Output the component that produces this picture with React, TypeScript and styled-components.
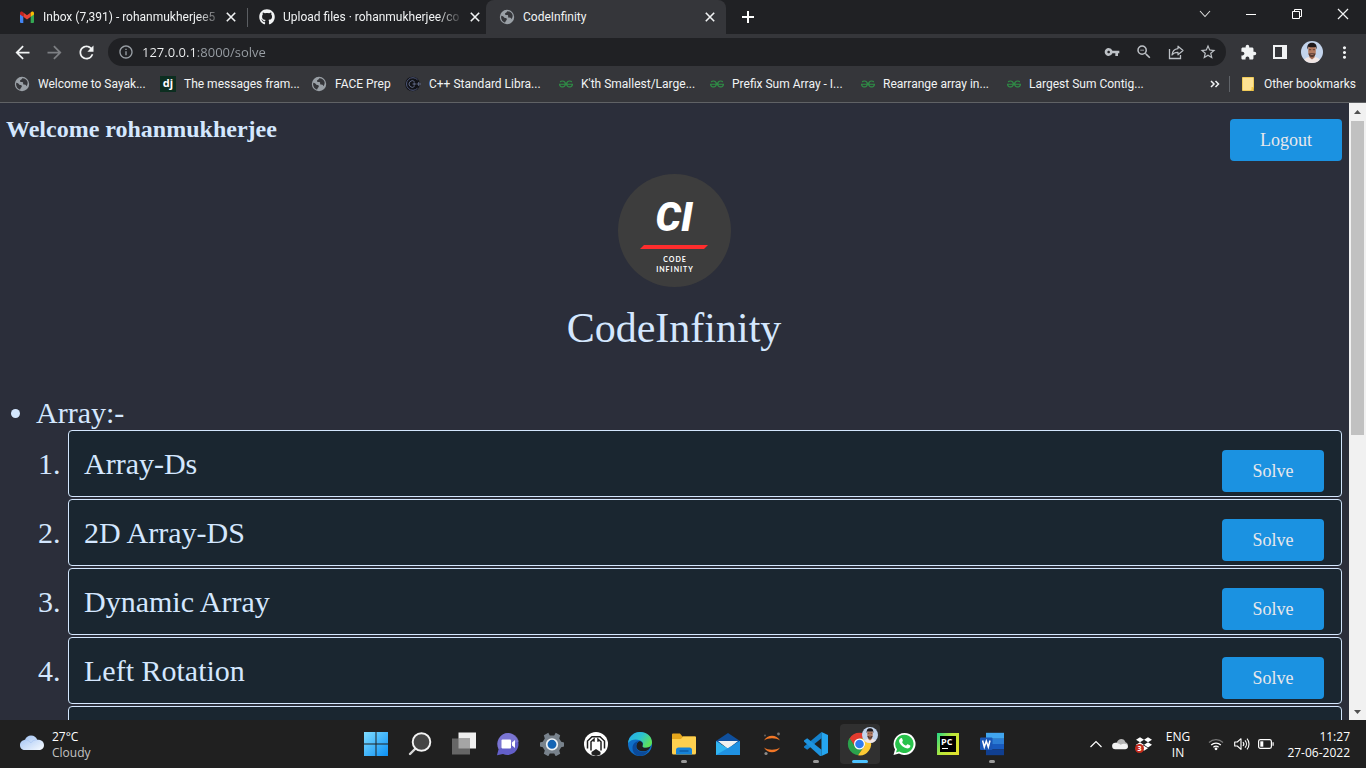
import React from "react";
import styled, { createGlobalStyle, css } from "styled-components";
import {
  MdArrowBack,
  MdArrowForward,
  MdRefresh,
  MdInfoOutline,
  MdVpnKey,
  MdZoomOut,
  MdStarBorder,
  MdExtension,
  MdMoreVert,
} from "react-icons/md";
import { FaGithub, FaDropbox } from "react-icons/fa";
import { SiGeeksforgeeks } from "react-icons/si";

const GlobalStyle = createGlobalStyle`
  * { box-sizing: border-box; }
  body { margin: 0; background: #2b2e3a; }
  button { border: 0; padding: 0; background: none; color: inherit; font: inherit; cursor: pointer; }
  a { color: inherit; text-decoration: none; }
  svg { display: block; flex: none; }
`;

const uiFont = `"Open Sans", "Noto Sans", sans-serif`;
const chromeFont = `Roboto, "Open Sans", sans-serif`;
const pageFont = `"Liberation Serif", "Times New Roman", serif`;

const Desktop = styled.div`
  height: 100vh;
  display: flex;
  flex-direction: column;
  overflow: hidden;
  font-family: ${uiFont};
  font-size: 12px;
`;

/* ---------- browser frame ---------- */

const BrowserHeader = styled.header`
  flex: none;
  background: #35363a;
  border-bottom: 1px solid #606265;
  color: #f1f3f4;
  font-family: ${chromeFont};
`;

const TabStrip = styled.div`
  height: 34px;
  display: flex;
  background: #202124;
  padding-left: 6px;
`;

const Tab = styled.div<{ $active?: boolean; $divided?: boolean }>`
  width: 240px;
  height: 34px;
  display: flex;
  align-items: center;
  gap: 8px;
  padding: 0 8px 0 13px;
  border-radius: 8px 8px 0 0;
  background: ${(p) =>
    p.$active
      ? "#35363a"
      : p.$divided
        ? "linear-gradient(#5b5e62, #5b5e62) 1px 8px / 1px 19px no-repeat"
        : "none"};
`;

const TabTitle = styled.span<{ $fade?: boolean }>`
  flex: 1;
  white-space: nowrap;
  line-height: 18px;
  ${(p) =>
    p.$fade &&
    css`
      mask-image: linear-gradient(90deg, #000 155px, transparent 180px);
    `}
`;

const SquareButton = styled.button<{ $w: number; $h: number }>`
  flex: none;
  width: ${(p) => p.$w}px;
  height: ${(p) => p.$h}px;
  display: flex;
  align-items: center;
  justify-content: center;
`;

const WindowControls = styled.div`
  display: flex;
  margin-left: auto;
`;

const Toolbar = styled.div`
  display: flex;
  align-items: center;
  height: 34px;
  padding: 4px 6px 2px;
  gap: 6px;
`;

const ToolGroup = styled.div<{ $color?: string }>`
  display: flex;
  align-items: center;
  color: ${(p) => p.$color ?? "#f1f3f4"};
`;

const AddressBar = styled.label`
  flex: 1;
  height: 28px;
  display: flex;
  align-items: center;
  padding: 0 2px 0 10px;
  gap: 8px;
  border-radius: 14px;
  background: #202124;
  color: #9aa0a6;
`;

const AddressInput = styled.input`
  flex: 1;
  min-width: 0;
  border: 0;
  padding: 0;
  outline: 0;
  font: 13px/20px ${uiFont};
  color: transparent;
  background: linear-gradient(90deg, #f1f3f4 55px, #9aa0a6 55px);
  background-clip: text;
  -webkit-background-clip: text;
`;

const BookmarkBar = styled.nav`
  display: flex;
  align-items: center;
  height: 34px;
  padding: 0 10px 2px 14px;
`;

const Bookmark = styled.a<{ $w?: number }>`
  flex: none;
  width: ${(p) => (p.$w ? `${p.$w}px` : "auto")};
  display: flex;
  align-items: center;
  gap: 8px;
  white-space: nowrap;
`;

const BookmarkEnd = styled.div`
  display: flex;
  align-items: center;
  margin-left: auto;
  gap: 8px;
`;

const Divider = styled.span`
  width: 1px;
  height: 16px;
  background: #5f6368;
  margin-right: 2px;
`;

/* ---------- web page ---------- */

const Viewport = styled.div`
  flex: 1;
  min-height: 0;
  display: flex;
  overflow: hidden;
`;

const Page = styled.main`
  flex: 1;
  min-width: 0;
  overflow: hidden;
  padding: 16px 7px 0 6px;
  background: #2b2e3a;
  color: #d4e7fe;
  font-family: ${pageFont};
`;

const PageHeader = styled.div`
  display: flex;
  justify-content: space-between;
  align-items: flex-start;
`;

const Welcome = styled.h2`
  margin: 0;
  font-size: 24px;
  line-height: 20px;
`;

const BlueButton = styled.button<{ $w: number }>`
  flex: none;
  width: ${(p) => p.$w}px;
  height: 42px;
  border-radius: 4px;
  background: #1b92e1;
  color: #e8e8ec;
  font-family: ${pageFont};
  font-size: 18px;
`;

const Brand = styled.div`
  display: flex;
  flex-direction: column;
  align-items: center;
  padding: 13px 0 44px;
`;

const LogoDisc = styled.div`
  width: 113px;
  height: 113px;
  border-radius: 50%;
  background: #3d3d3d;
  color: #fff;
  display: flex;
  flex-direction: column;
  align-items: center;
  padding-top: 20px;
`;

const Monogram = styled.span`
  font: italic 900 40px/48px Roboto, sans-serif;
`;

const LogoCaption = styled.span`
  margin-top: 4px;
  padding-left: 2px;
  text-align: center;
  font: 700 7px/10px Lato, sans-serif;
  letter-spacing: 1px;
`;

const BrandName = styled.h1`
  margin: 17px 0 0;
  font-size: 42px;
  font-weight: 400;
  line-height: 48px;
`;

const TopicList = styled.ul`
  margin: 0;
  padding-left: 30px;
  font-size: 30px;
  line-height: 34px;
`;

const ProblemList = styled.ol`
  margin: 0;
  padding-left: 32px;
  display: flex;
  flex-direction: column;
  gap: 2px;
`;

const ProblemItem = styled.li`
  min-height: 67px;
  padding: 19px 17px 0 15px;
  border: 1px solid #d4e7fe;
  border-radius: 4px;
  background: #1a2630;
  line-height: 28px;
`;

const ProblemRow = styled.div`
  display: flex;
  justify-content: space-between;
  height: 28px;
`;

const ScrollRail = styled.div`
  flex: none;
  width: 17px;
  display: flex;
  flex-direction: column;
  align-items: center;
  background: #f1f1f1;
`;

const ScrollTrack = styled.div`
  flex: 1;
  width: 13px;
`;

const ScrollThumb = styled.div`
  height: 54%;
  background: #c1c1c1;
`;

/* ---------- taskbar ---------- */

const Taskbar = styled.footer`
  flex: none;
  height: 48px;
  display: grid;
  grid-template-columns: 1fr auto 1fr;
  align-items: center;
  background: #202020;
  color: #fff;
`;

const Weather = styled.button`
  justify-self: start;
  display: flex;
  align-items: center;
  gap: 8px;
  margin-left: 20px;
  text-align: left;
  line-height: 16px;
`;

const Muted = styled.span`
  color: #c4c4c4;
`;

const Stack = styled.span<{ $align?: string }>`
  display: flex;
  flex-direction: column;
  padding-top: 2px;
  align-items: ${(p) => p.$align ?? "flex-start"};
`;

const AppRow = styled.div`
  display: flex;
  gap: 4px;
  padding-left: 2px;
`;

const AppButton = styled.button<{ $state?: "open" | "active" }>`
  position: relative;
  width: 40px;
  height: 40px;
  display: flex;
  align-items: center;
  justify-content: center;
  border-radius: 4px;
  background: ${(p) => (p.$state === "active" ? "#303030" : "none")};
  ${(p) =>
    p.$state &&
    css`
      &::after {
        content: "";
        position: absolute;
        bottom: 1px;
        width: ${p.$state === "active" ? 16 : 6}px;
        height: 3px;
        border-radius: 2px;
        background: ${p.$state === "active" ? "#4cc2ff" : "#9a9a9a"};
      }
    `}
`;

const Tray = styled.div`
  justify-self: end;
  display: flex;
  align-items: center;
  margin-right: 16px;
  line-height: 16px;
`;

const TrayButton = styled.button<{ $w: number }>`
  width: ${(p) => p.$w}px;
  height: 40px;
  display: flex;
  align-items: center;
  justify-content: center;
`;

const Clock = styled.button`
  width: 70px;
  display: flex;
  justify-content: flex-end;
  white-space: nowrap;
  text-align: right;
`;

/* ---------- drawings ---------- */

const Svg = ({ s = 24, box = 24, children }: { s?: number; box?: number; children: React.ReactNode }) => (
  <svg width={s} height={s} viewBox={`0 0 ${box} ${box}`} fill="none" aria-hidden="true">
    {children}
  </svg>
);

const Gmail = () => (
  <Svg s={16} box={16}>
    <path d="M1 4.5V13a1 1 0 0 0 1 1h2.3V7.2z" fill="#4285f4" />
    <path d="M15 4.5V13a1 1 0 0 1-1 1h-2.3V7.2z" fill="#34a853" />
    <path d="M4.3 3.4v4.4L8 10.6l3.7-2.8V3.4L8 6.2z" fill="#ea4335" />
    <path d="M1 4.2v1.2l3.3 2.4V3.4l-.9-.7C2.4 2 1 2.7 1 4.2z" fill="#c5221f" />
    <path d="M15 4.2v1.2l-3.3 2.4V3.4l.9-.7c1-.7 2.400 0 2.400 1.500z" fill="#fbbc04" />
  </Svg>
);

const Globe = () => (
  <Svg s={16} box={16}>
    <circle cx="8" cy="8" r="7.2" fill="#9aa0a6" />
    <path d="M2.300 6.800C3.600 7 4.600 7.400 5 8.300c.4.800 1.500.8 2.300 1 .9.300.6 1.600-.1 2.200-.7.500-.6 1.700-1.300 2.100C3.400 12.800 1.500 10 2.300 6.800z" fill="#35363a" />
    <path d="M8.300 2.200c-.4 1.500-2 1.400-2.300 2.500-.3 1.100 1 1.400 2 1.300 1.200-.1 1.300 1 1.100 1.800-.1.800.9.900 1.600.8.900-.1 1.500.7 1.500 1.700 1.100-1.100 1.800-3 1.300-4.600C12.700 3.400 10.500 2 8.300 2.200z" fill="#35363a" />
  </Svg>
);

const Cross = ({ s = 10, w = 1.6 }: { s?: number; w?: number }) => (
  <Svg s={s} box={10}>
    <path d="M.8.8l8.400 8.400M9.200.8L.8 9.200" stroke="#f1f3f4" strokeWidth={w} />
  </Svg>
);

const DjangoBox = styled.span`
  width: 16px;
  height: 16px;
  background: #0c2e20;
  color: #fff;
  text-align: center;
  font: 700 11px/14px ${uiFont};
`;

const CppIcon = () => (
  <Svg s={16} box={16}>
    <circle cx="7.5" cy="8" r="7.3" fill="#111217" />
    <path d="M12.500 3.800A6.300 6.300 0 1 0 12.500 12.200" stroke="#4e5779" strokeWidth="1" />
    <path d="M9.500 5.500a3.300 3.300 0 1 0 0 5M7.500 8h3.500M9.200 6.300v3.400M11.500 8H16M13.700 6v4" stroke="#66708f" strokeWidth=".9" />
  </Svg>
);

const ShareIcon = () => (
  <Svg s={16} box={16}>
    <path d="M1.500 5v9.500h11V11" stroke="currentColor" strokeWidth="1.3" />
    <path d="M10 2.200l5 4.300-5 4.300V8.400C7.500 8.300 5.500 9 4 11c.3-3.300 2.400-6 6-6.400z" stroke="currentColor" strokeWidth="1.2" strokeLinejoin="round" />
  </Svg>
);

const Avatar = ({ s }: { s: number }) => (
  <Svg s={s} box={22}>
    <clipPath id={`face${s}`}>
      <circle cx="11" cy="11" r="11" />
    </clipPath>
    <g clipPath={`url(#face${s})`}>
      <path d="M0 0h22v22H0z" fill="#c3d4ec" />
      <path d="M2 22c.5-4 3-5.500 6.500-6h5c3.500.5 6 2 6.500 6z" fill="#f1e6e4" />
      <path d="M8.500 13h5v3.500L11 18.500l-2.500-2z" fill="#a56d55" />
      <path d="M7.200 6h7.600v5c0 3-1.800 5-3.800 5s-3.800-2-3.800-5z" fill="#b27a60" />
      <path d="M6.500 8.500C5.700 4.500 7.500 1.800 11 1.800s5.300 2.700 4.500 6.700l-.8-2.500c-2 .4-5 .4-7.300-.3z" fill="#1e191b" />
      <path d="M7.400 12.300c1 .6 2-.2 3.600-.2s2.600.8 3.600.2c-.3 2.400-1.800 4-3.600 4s-3.300-1.600-3.600-4z" fill="#553a31" />
      <path d="M9.500 13.300h3" stroke="#c08676" strokeWidth=".8" />
      <path d="M8 8.700h2.200M11.800 8.700H14" stroke="#4b302a" strokeWidth=".8" />
    </g>
  </Svg>
);

const CloudIcon = () => (
  <Svg s={24}>
    <defs>
      <linearGradient id="cloud" x1="0" y1="0" x2="1" y2="1">
        <stop stopColor="#9dc0f3" />
        <stop offset="1" stopColor="#f7fbff" />
      </linearGradient>
    </defs>
    <path d="M5 8c.8-3 3.300-4.500 6-4.500 3.200 0 5.300 1.600 6.200 4.300C21 7.700 24 9.600 24 13c0 3.300-2.200 5-5 5H5c-3 0-5-2-5-4.800C0 10.200 2.200 8 5 8z" fill="url(#cloud)" />
    <path d="M4.500 8c2.600-.3 5 .6 6.300 3 1-1.800 3.400-3.300 6.400-3.200" stroke="#a9c6f2" strokeWidth=".7" />
  </Svg>
);

const WindowsIcon = () => (
  <Svg>
    <defs>
      <linearGradient id="win" gradientUnits="userSpaceOnUse" x1="0" y1="0" x2="24" y2="24">
        <stop stopColor="#7fdcff" />
        <stop offset="1" stopColor="#0b90f5" />
      </linearGradient>
    </defs>
    <path d="M0 0h11.500v11.500H0zM12.500 0H24v11.500H12.500zM0 12.500h11.500V24H0zM12.500 12.500H24V24H12.500z" fill="url(#win)" />
  </Svg>
);

const SearchIcon = () => (
  <Svg>
    <path d="M2 22l6.500-6.500" stroke="#d8d8d8" strokeWidth="2.4" strokeLinecap="round" />
    <circle cx="13.5" cy="10" r="8.800" fill="#464646" stroke="#f4f4f4" strokeWidth="1.900" />
  </Svg>
);

const TaskViewIcon = () => (
  <Svg>
    <path d="M6.500.500H24v16H6.500z" fill="#f0f0f0" />
    <path d="M0 6.500h18v16H0z" fill="#666" />
    <path d="M6.500 6.500H18v10H6.500z" fill="#a5a5a5" />
  </Svg>
);

const ChatIcon = () => (
  <Svg>
    <path d="M12.500 1A11 11 0 1 1 7 22L1 23.200 2.600 17A11 11 0 0 1 12.500 1z" fill="#635fc9" />
    <path d="M12.500 1A11 11 0 0 0 2.600 17L23 9.500A11 11 0 0 0 12.500 1z" fill="#8b83d8" opacity=".6" />
    <rect x="5.5" y="7.5" width="9.5" height="9" rx="1" fill="#fff" />
    <path d="M16 10.500L19 8v8l-3-2.500z" fill="#fff" />
  </Svg>
);

const GearIcon = () => (
  <Svg>
    <path d="M8.300.800L9.800 3.500h4.400L15.700.8l4.500 2.400-1 3.200 2 3.400 2.800.7v4l-2.800.700-2 3.400 1 3.200-4.500 2.400-1.500-2.700H9.800l-1.500 2.700-4.500-2.400 1-3.200-2-3.400-2.800-.7v-4l2.800-.7 2-3.400-1-3.200z" fill="#78828c" />
    <circle cx="12" cy="12.300" r="5.300" fill="#1464b4" stroke="#eef2f5" strokeWidth="1.700" />
  </Svg>
);

const BadgeIcon = () => (
  <Svg>
    <circle cx="12" cy="12" r="12" fill="#fff" />
    <path d="M3.500 16.500V9L8 4.700h8L20.500 9v7.500" stroke="#202020" strokeWidth="1.500" />
    <path d="M7 18.500V9.800l3-2.600v2.600M17 18.500V9.800l-3-2.600v2.600" stroke="#202020" strokeWidth="1.500" />
    <path d="M7.500 22.500v-2.500L12 17l4.500 3v2.500L12 24z" fill="#202020" />
  </Svg>
);

const EdgeIcon = () => (
  <Svg>
    <defs>
      <linearGradient id="edge" x1="0" y1="0" x2="1" y2=".5">
        <stop stopColor="#26a9ea" />
        <stop offset=".55" stopColor="#2cc3cf" />
        <stop offset="1" stopColor="#5de05a" />
      </linearGradient>
    </defs>
    <circle cx="12" cy="12" r="12" fill="#0f6fc8" />
    <path d="M0 11C.8 4.700 5.700 0 12 0c7 0 12 4.800 12 10.200 0 3.400-2.600 5.600-5.800 5.600-3.400 0-4.200-1.400-3.600-2.400.7-1 .6-2.200 0-3.200C12.800 7.300 4 5.500 0 11z" fill="url(#edge)" />
    <path d="M8.300 15c-.4-3 1.400-5.200 3.500-6 1.700.2 3.700 2.200 2.800 4.400-.6 1 .2 2.400 3.600 2.400 1.800 0 3.300-.5 4.500-1.700-1 3-2.500 4.400-4.700 4.900-4.600 1-9.100-.7-9.700-4z" fill="#202020" />
    <path d="M8.300 15c.4 4.300 5.900 6 10.200 4.300 1-.4 2-.9 2.600-1.500C18.500 22 15.500 24 12 24c-5 0-7.500-4-7.500-8 0-4 3-7 7.300-7-2.500 1-3.800 3.300-3.500 6z" fill="#0b4a9a" />
  </Svg>
);

const ExplorerIcon = () => (
  <Svg>
    <path d="M0 2.500a1 1 0 0 1 1-1h7l2.500 3H23a1 1 0 0 1 1 1V10H0z" fill="#e5a61c" />
    <path d="M0 7h9l2-2.500h12a1 1 0 0 1 1 1V21a1.500 1.500 0 0 1-1.500 1.500h-21A1.500 1.500 0 0 1 0 21z" fill="#fdd04f" />
    <path d="M4 22.500V18a2.500 2.500 0 0 1 2.500-2.500h11A2.500 2.500 0 0 1 20 18v4.500z" fill="#1583d8" />
    <path d="M7.500 19h9" stroke="#0c5da8" strokeWidth="1.5" />
  </Svg>
);

const MailIcon = () => (
  <Svg>
    <path d="M0 9l12-8 12 8v3H0z" fill="#0f4f9c" />
    <path d="M2 9h20l-10 8z" fill="#f1f1f1" />
    <path d="M0 9l12 7.500L24 9v14H0z" fill="#31b5f1" />
    <path d="M24 9L0 23h24z" fill="#1a85dc" opacity=".75" />
  </Svg>
);

const JupyterIcon = () => (
  <Svg>
    <path d="M4 8.500c3-6.300 13-6.300 16 0-4-3-12-3-16 0zM4 15.500c3 6.300 13 6.300 16 0-4 3-12 3-16 0z" fill="#f37726" />
    <circle cx="18.5" cy="2" r="1.400" fill="#777" />
    <circle cx="6" cy="21.500" r="1.600" fill="#8a8a8a" />
    <circle cx="5" cy="3.500" r=".9" fill="#666" />
  </Svg>
);

const CodeIcon = () => (
  <Svg>
    <path d="M17.500 0v6.300L3.200 17.800 0 15.500v-1z" fill="#1481cc" />
    <path d="M17.500 17.700L3.200 6.200 0 8.500v1L16 24h1.500z" fill="#1e93de" />
    <path d="M17.500 0L24 3v18l-6.500 3z" fill="#25a5ef" />
  </Svg>
);

const ChromeIcon = () => (
  <svg width="30" height="30" viewBox="-1 2 30 30" fill="none" aria-hidden="true">
    <path d="M3.500 11.500A11.500 11.500 0 0 1 23.500 11.500H13.500L8.500 19z" fill="#e33b2e" />
    <path d="M3.500 11A11.500 11.500 0 0 0 12 28.300L18 19.500H9z" fill="#2ba24c" />
    <path d="M13.500 11.500H23.700A11.500 11.500 0 0 1 12 28.300l6.500-9.300z" fill="#fcc934" />
    <circle cx="13.5" cy="17" r="5.500" fill="#fff" />
    <circle cx="13.5" cy="17" r="4.300" fill="#2f7cf0" />
  </svg>
);

const AvatarBadge = styled.span`
  position: absolute;
  top: 3px;
  right: 2px;
`;

const WhatsAppIcon = () => (
  <Svg>
    <path d="M12.500 1A11 11 0 1 1 7 21.500L1.500 23 3 17.500A11 11 0 0 1 12.500 1z" fill="#fff" />
    <path d="M12.500 2.700A9.200 9.200 0 1 1 7.300 19.600L4 20.600l1-3.300A9.200 9.200 0 0 1 12.500 2.700z" fill="#28c24b" />
    <path d="M8.500 6.500c1-.8 1.500-.4 2 .9.500 1.200.6 1.400-.1 2.100-.5.600-.2.900.5 1.900.8 1 1.700 1.600 2.600 2 .7.300.9 0 1.600-.8.500-.6.700-.4 1.800.1 1.500.7 1.600.9 1.400 1.800-.4 1.500-2.300 2.200-3.800 1.800-4.200-1.200-7-4.300-7.400-7-.2-1.100.5-2.100 1.400-2.800z" fill="#fff" />
  </Svg>
);

const PyCharmBox = styled.span`
  width: 22px;
  height: 22px;
  padding: 3px;
  background: linear-gradient(120deg, #21d789, #b8e83a 45%, #e8e02c);
  display: flex;
`;

const PyCharmInner = styled.span`
  flex: 1;
  background: #000 linear-gradient(#fff, #fff) 2px 12px / 6px 1px no-repeat;
  color: #fff;
  text-align: left;
  padding-left: 1px;
  font: 700 9px/11px ${uiFont};
`;

const WordIcon = () => (
  <Svg>
    <path d="M6 .8h18v6H6z" fill="#41a5ee" />
    <path d="M6 6.500h18v5.500H6z" fill="#2b7cd3" />
    <path d="M6 12h18v5.500H6z" fill="#185abd" />
    <path d="M6 17.500h18v5.700H6z" fill="#103f91" />
    <rect y="5.500" width="12.500" height="12.500" rx="1" fill="#1a56b5" />
    <path d="M2.600 8.500l1.700 6.500 2-6 2 6L10 8.500" stroke="#fff" strokeWidth="1.500" />
  </Svg>
);

const DropboxWrap = styled.span`
  position: relative;
  display: flex;
`;

const CountBadge = styled.span`
  position: absolute;
  left: -1px;
  bottom: -1px;
  width: 9px;
  height: 9px;
  border-radius: 50%;
  background: #c42b1c;
  color: #fff;
  text-align: center;
  font: 700 7px/9px ${uiFont};
`;

const Arrow = ({ down }: { down?: boolean }) => (
  <svg width="7" height="4" viewBox="0 0 7 4" aria-hidden="true">
    <path d={down ? "M0 0h7L3.500 4z" : "M0 4h7L3.500 0z"} fill="#505050" />
  </svg>
);

/* ---------- data ---------- */

const gfg = <SiGeeksforgeeks size={14} color="#2f8d46" />;

const bookmarks: { label: string; w: number; icon: React.ReactNode }[] = [
  { label: "Welcome to Sayak...", w: 146, icon: <Globe /> },
  { label: "The messages fram...", w: 151, icon: <DjangoBox>dj</DjangoBox> },
  { label: "FACE Prep", w: 94, icon: <Globe /> },
  { label: "C++ Standard Libra...", w: 154, icon: <CppIcon /> },
  { label: "K'th Smallest/Large...", w: 151, icon: gfg },
  { label: "Prefix Sum Array - I...", w: 151, icon: gfg },
  { label: "Rearrange array in...", w: 146, icon: gfg },
  { label: "Largest Sum Contig...", w: 146, icon: gfg },
];

const problems = ["Array-Ds", "2D Array-DS", "Dynamic Array", "Left Rotation"];

const apps: { name: string; icon: React.ReactNode; state?: "open" | "active" }[] = [
  { name: "Start", icon: <WindowsIcon /> },
  { name: "Search", icon: <SearchIcon /> },
  { name: "Task view", icon: <TaskViewIcon /> },
  { name: "Chat", icon: <ChatIcon /> },
  { name: "Settings", icon: <GearIcon /> },
  { name: "Armoury", icon: <BadgeIcon /> },
  { name: "Edge", icon: <EdgeIcon /> },
  { name: "File Explorer", icon: <ExplorerIcon />, state: "open" },
  { name: "Mail", icon: <MailIcon /> },
  { name: "Jupyter", icon: <JupyterIcon /> },
  { name: "Visual Studio Code", icon: <CodeIcon />, state: "open" },
  {
    name: "Chrome",
    state: "active",
    icon: (
      <>
        <ChromeIcon />
        <AvatarBadge>
          <Avatar s={16} />
        </AvatarBadge>
      </>
    ),
  },
  { name: "WhatsApp", icon: <WhatsAppIcon /> },
  {
    name: "PyCharm",
    icon: (
      <PyCharmBox>
        <PyCharmInner>PC</PyCharmInner>
      </PyCharmBox>
    ),
  },
  { name: "Word", icon: <WordIcon />, state: "open" },
];

export default function App() {
  return (
    <Desktop>
      <GlobalStyle />
      <BrowserHeader>
        <TabStrip>
          <Tab>
            <Gmail />
            <TabTitle $fade>Inbox (7,391) - rohanmukherjee5</TabTitle>
            <SquareButton $w={16} $h={16} aria-label="Close tab"><Cross /></SquareButton>
          </Tab>
          <Tab $divided>
            <FaGithub size={16} />
            <TabTitle $fade>Upload files · rohanmukherjee/co</TabTitle>
            <SquareButton $w={16} $h={16} aria-label="Close tab"><Cross /></SquareButton>
          </Tab>
          <Tab $active>
            <Globe />
            <TabTitle>CodeInfinity</TabTitle>
            <SquareButton $w={16} $h={16} aria-label="Close tab"><Cross /></SquareButton>
          </Tab>
          <SquareButton $w={44} $h={34} aria-label="New tab">
            <Svg s={12} box={12}><path d="M6 0v12M0 6h12" stroke="#fff" strokeWidth="2" /></Svg>
          </SquareButton>
          <WindowControls>
            <SquareButton $w={46} $h={28} aria-label="Search tabs">
              <Svg s={12} box={12}><path d="M1 3l5 5.500L11 3" stroke="#ddd" strokeWidth="1.1" /></Svg>
            </SquareButton>
            <SquareButton $w={46} $h={28} aria-label="Minimize">
              <Svg s={10} box={10}><path d="M0 5.500h10" stroke="#fff" /></Svg>
            </SquareButton>
            <SquareButton $w={46} $h={28} aria-label="Restore">
              <Svg s={10} box={10}><path d="M.5 2.500h7v7h-7zM2.500 2.500v-2h7v7h-2" stroke="#fff" /></Svg>
            </SquareButton>
            <SquareButton $w={46} $h={28} aria-label="Close"><Cross s={12} w={1} /></SquareButton>
          </WindowControls>
        </TabStrip>
        <Toolbar>
          <ToolGroup>
            <SquareButton $w={32} $h={28} aria-label="Back"><MdArrowBack size={21} /></SquareButton>
            <ToolGroup $color="#7d7f83">
              <SquareButton $w={32} $h={28} aria-label="Forward"><MdArrowForward size={21} /></SquareButton>
            </ToolGroup>
            <SquareButton $w={32} $h={28} aria-label="Reload"><MdRefresh size={21} /></SquareButton>
          </ToolGroup>
          <AddressBar>
            <MdInfoOutline size={16} />
            <AddressInput aria-label="Address" defaultValue="127.0.0.1:8000/solve" />
            <ToolGroup $color="#bdc1c6">
              <SquareButton $w={32} $h={28} aria-label="Passwords"><MdVpnKey size={16} /></SquareButton>
              <SquareButton $w={32} $h={28} aria-label="Zoom"><MdZoomOut size={18} /></SquareButton>
              <SquareButton $w={32} $h={28} aria-label="Share"><ShareIcon /></SquareButton>
              <SquareButton $w={32} $h={28} aria-label="Bookmark"><MdStarBorder size={18} /></SquareButton>
            </ToolGroup>
          </AddressBar>
          <ToolGroup>
            <SquareButton $w={32} $h={28} aria-label="Extensions"><MdExtension size={17} /></SquareButton>
            <SquareButton $w={32} $h={28} aria-label="Side panel">
              <Svg s={14} box={14}><path d="M1 1h12v12H1z" stroke="#f1f3f4" strokeWidth="2" /><path d="M9 1h4v12H9z" fill="#f1f3f4" /></Svg>
            </SquareButton>
            <SquareButton $w={32} $h={28} aria-label="Profile"><Avatar s={22} /></SquareButton>
            <SquareButton $w={32} $h={28} aria-label="Menu"><MdMoreVert size={19} /></SquareButton>
          </ToolGroup>
        </Toolbar>
        <BookmarkBar>
          {bookmarks.map((b) => (
            <Bookmark key={b.label} href="#" $w={b.w}>
              {b.icon}
              {b.label}
            </Bookmark>
          ))}
          <BookmarkEnd>
            <SquareButton $w={12} $h={20} aria-label="More bookmarks">
              <Svg s={10} box={10}><path d="M1 2l3 3-3 3M5.500 2l3 3-3 3" stroke="#f1f3f4" strokeWidth="1.5" /></Svg>
            </SquareButton>
            <Divider />
            <Bookmark href="#">
              <Svg s={16} box={16}>
                <path d="M2.500 1.500h11v10l-2 3h-9z" fill="#fde293" stroke="#f0cb59" />
                <path d="M11.500 11h2.300v4h-2.300z" fill="#f6c944" />
              </Svg>
              Other bookmarks
            </Bookmark>
          </BookmarkEnd>
        </BookmarkBar>
      </BrowserHeader>

      <Viewport>
        <Page>
          <PageHeader>
            <Welcome>Welcome rohanmukherjee</Welcome>
            <BlueButton $w={112}>Logout</BlueButton>
          </PageHeader>
          <Brand>
            <LogoDisc>
              <Monogram>CI</Monogram>
              <svg width="68" height="8" viewBox="0 0 68 8" aria-hidden="true">
                <path d="M0 7l4-4h64l-4 4z" fill="#ff2d2d" />
              </svg>
              <LogoCaption>
                CODE
                <br />
                INFINITY
              </LogoCaption>
            </LogoDisc>
            <BrandName>CodeInfinity</BrandName>
          </Brand>
          <TopicList>
            <li>
              Array:-
              <ProblemList>
                {problems.map((name) => (
                  <ProblemItem key={name}>
                    <ProblemRow>
                      <span>{name}</span>
                      <BlueButton $w={102}>Solve</BlueButton>
                    </ProblemRow>
                  </ProblemItem>
                ))}
                <ProblemItem />
              </ProblemList>
            </li>
          </TopicList>
        </Page>
        <ScrollRail>
          <SquareButton $w={17} $h={18} aria-label="Scroll up"><Arrow /></SquareButton>
          <ScrollTrack><ScrollThumb /></ScrollTrack>
          <SquareButton $w={17} $h={17} aria-label="Scroll down"><Arrow down /></SquareButton>
        </ScrollRail>
      </Viewport>

      <Taskbar>
        <Weather>
          <CloudIcon />
          <Stack>
            <span>27°C</span>
            <Muted>Cloudy</Muted>
          </Stack>
        </Weather>
        <AppRow>
          {apps.map((a) => (
            <AppButton key={a.name} aria-label={a.name} $state={a.state}>
              {a.icon}
            </AppButton>
          ))}
        </AppRow>
        <Tray>
          <TrayButton $w={24} aria-label="Hidden icons">
            <Svg s={12} box={12}><path d="M.5 9L6 3.500 11.500 9" stroke="#fff" strokeWidth="1.2" /></Svg>
          </TrayButton>
          <TrayButton $w={24} aria-label="OneDrive">
            <Svg s={16} box={16}>
              <path d="M2 10c0-2 1.200-3.200 2.800-3.400C5.600 4.300 7.300 3 9.300 3c2 0 3.700 1.200 4.200 3.300C15 6.700 16 8 16 9.500z" fill="#b5b5b5" />
              <path d="M3.500 13.300A3.300 3.300 0 0 1 3.300 6.700c2.400 0 4 1 5.400 2 1-.6 2-.9 3.300-.9 2.300 0 4 1 4 2.800s-1.300 2.700-2.800 2.700z" fill="#f2f2f2" />
            </Svg>
          </TrayButton>
          <TrayButton $w={24} aria-label="Dropbox">
            <DropboxWrap>
              <FaDropbox size={16} />
              <CountBadge>3</CountBadge>
            </DropboxWrap>
          </TrayButton>
          <TrayButton $w={44}>
            <Stack $align="center">
              <span>ENG</span>
              <span>IN</span>
            </Stack>
          </TrayButton>
          <TrayButton $w={32} aria-label="Wi-Fi">
            <Svg s={16} box={16}>
              <path d="M1 6.500a10 10 0 0 1 14 0" stroke="#777" strokeWidth="1.2" />
              <path d="M3.200 9a7 7 0 0 1 9.600 0M5.400 11.200a4 4 0 0 1 5.200 0" stroke="#fff" strokeWidth="1.3" />
              <circle cx="8" cy="12.8" r="1.4" fill="#fff" />
            </Svg>
          </TrayButton>
          <TrayButton $w={20} aria-label="Volume">
            <Svg s={16} box={16}>
              <path d="M.7 6v4h2.600L7 13.300V2.700L3.300 6z" stroke="#fff" strokeWidth="1.1" strokeLinejoin="round" />
              <path d="M9 6a3 3 0 0 1 0 4M11 4.300a5.500 5.500 0 0 1 0 7.400M13 2.700a8 8 0 0 1 0 10.600" stroke="#fff" strokeWidth="1.1" />
            </Svg>
          </TrayButton>
          <TrayButton $w={28} aria-label="Battery">
            <Svg s={16} box={16}>
              <rect x=".6" y="3.600" width="12.800" height="8.800" rx="1.800" stroke="#fff" strokeWidth="1.2" />
              <path d="M2.300 5.300h3v5.400h-3z" fill="#fff" />
              <path d="M14.500 6.300h1.200v3.400h-1.200z" fill="#fff" />
            </Svg>
          </TrayButton>
          <Clock>
            <Stack $align="flex-end">
              <span>11:27</span>
              <span>27-06-2022</span>
            </Stack>
          </Clock>
        </Tray>
      </Taskbar>
    </Desktop>
  );
}
